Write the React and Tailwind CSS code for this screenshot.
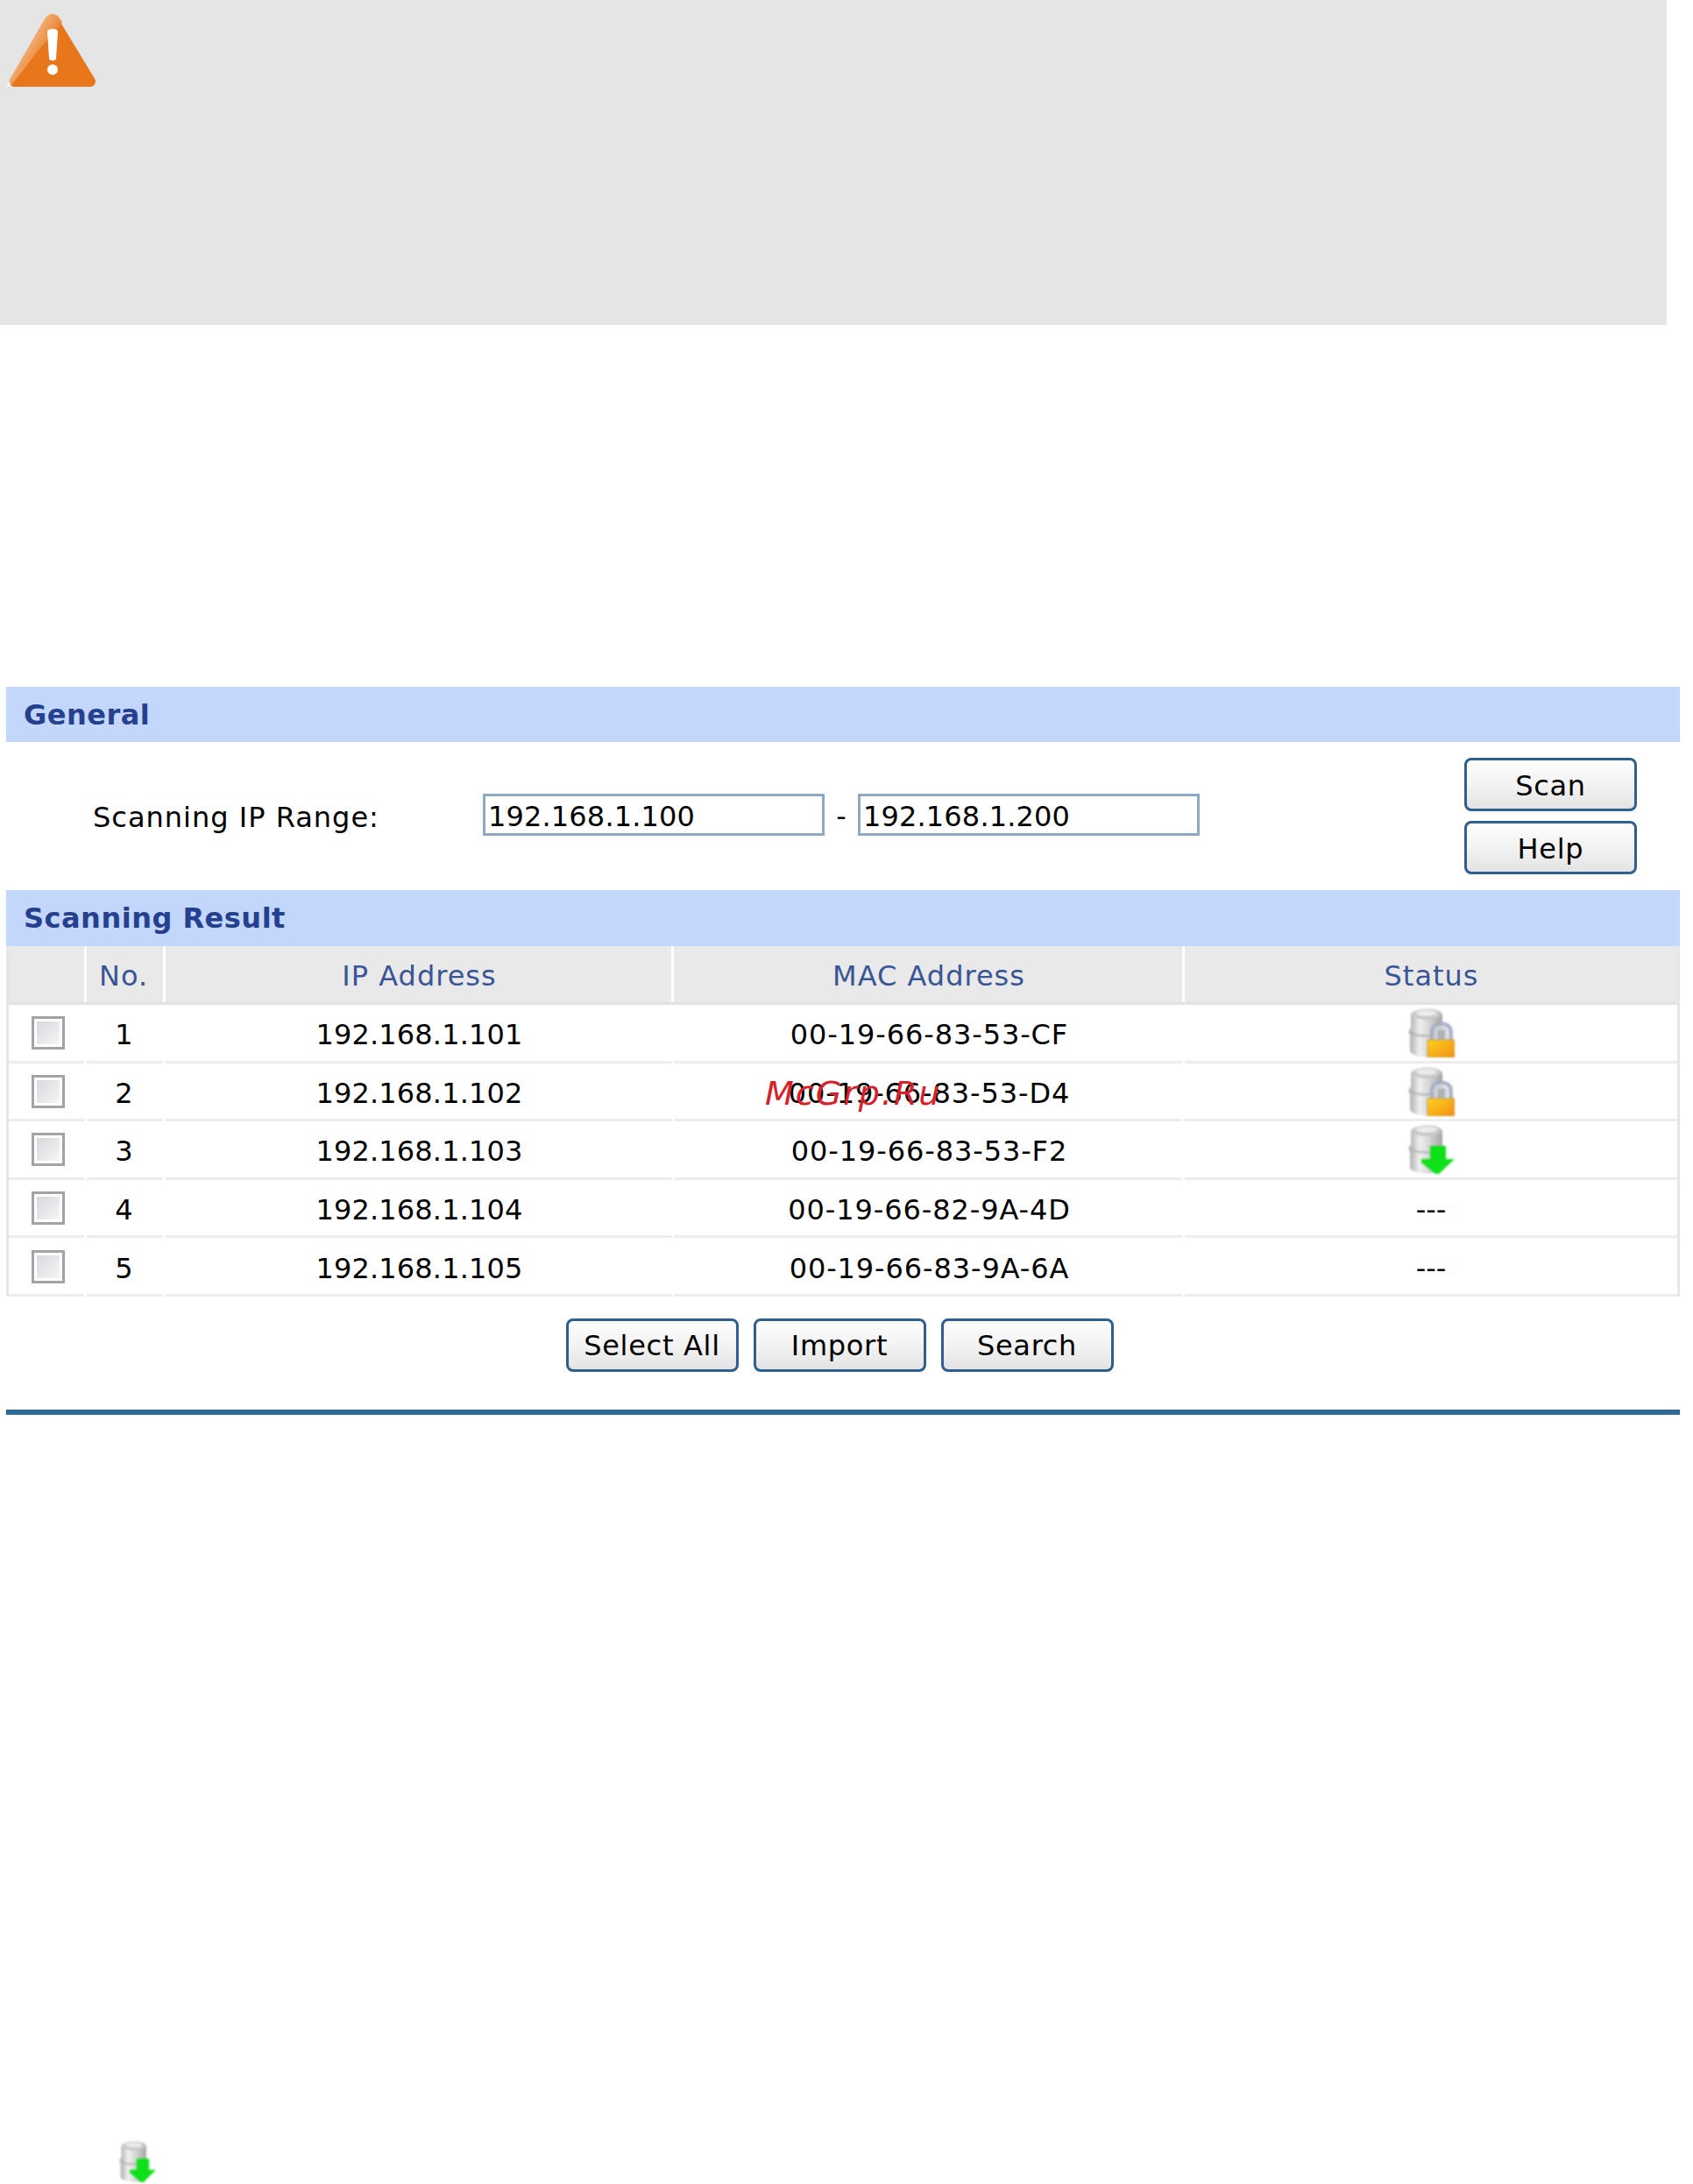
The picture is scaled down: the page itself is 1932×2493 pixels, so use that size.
import React from 'react';

const rows = [
  { no: 1, ip: '192.168.1.101', mac: '00-19-66-83-53-CF', status: 'lock' },
  { no: 2, ip: '192.168.1.102', mac: '00-19-66-83-53-D4', status: 'lock' },
  { no: 3, ip: '192.168.1.103', mac: '00-19-66-83-53-F2', status: 'down' },
  { no: 4, ip: '192.168.1.104', mac: '00-19-66-82-9A-4D', status: null },
  { no: 5, ip: '192.168.1.105', mac: '00-19-66-83-9A-6A', status: null },
];

function WarningIcon() {
  return (
    <svg width="102" height="85" viewBox="0 0 102 85" className="block">
      <defs>
        <linearGradient id="warn-gloss" x1="0.25" y1="0.1" x2="0.8" y2="0.55">
          <stop offset="0" stopColor="#f8d4b4" />
          <stop offset="0.5" stopColor="#f0a565" />
          <stop offset="1" stopColor="#e8761a" />
        </linearGradient>
      </defs>
      <polygon points="53,7 10,78 96,78" fill="#e8761a" stroke="#e8761a" strokeWidth="12" strokeLinejoin="round" />
      <path d="M53 1 C47 1 45 5 42 10 L4 76 C3 79 3 81 5 83 L22 62 C36 42 50 28 64 11 C61 5 58 1 53 1 Z" fill="url(#warn-gloss)" />
      <path d="M47 22 C47 19 49 18 53 18 C57 18 59 19 59 22 L57 52 C56.5 55 49.5 55 49 52 Z" fill="#fff" />
      <circle cx="53" cy="64.5" r="6" fill="#fff" />
      <path d="M-1 84 L4 78 L5 83 Z" fill="#f4f4f4" />
    </svg>
  );
}

function DbIcon({ type, width = 53, height = 57 }) {
  const id = `db-${type}`;
  return (
    <svg width={width} height={height} viewBox="0 0 53 57" preserveAspectRatio="none" className="block blur-[0.8px]">
      <defs>
        <linearGradient id={`${id}-body`} x1="0" y1="0" x2="1" y2="0">
          <stop offset="0" stopColor="#a8a8a8" />
          <stop offset="0.3" stopColor="#f0f0f0" />
          <stop offset="0.55" stopColor="#d8d8d8" />
          <stop offset="1" stopColor="#9c9c9c" />
        </linearGradient>
        <linearGradient id={`${id}-lock`} x1="0" y1="0" x2="1" y2="1">
          <stop offset="0" stopColor="#ffd21e" />
          <stop offset="1" stopColor="#ef8f10" />
        </linearGradient>
      </defs>
      <path d="M3 9 C3 -1 39 -1 39 9 L39 24 C42 26 42 29 40 31 L40 49 C40 59 2 59 2 49 L2 31 C0 29 0 26 3 24 Z" fill={`url(#${id}-body)`} />
      <ellipse cx="21" cy="8" rx="16" ry="6" fill="#c8c8c8" />
      <ellipse cx="21" cy="6.5" rx="12" ry="3.5" fill="#ebebeb" />
      <path d="M2 28 C8 34 34 34 40 28" fill="none" stroke="#b0b0b0" strokeWidth="2" />
      {type === 'lock' ? (
        <>
          <path d="M27 38 L27 28 C27 15 49 15 49 28 L49 38" fill="#d0d4de" fillOpacity="0.8" stroke="#a4aac2" strokeWidth="3.5" />
          <rect x="34" y="26" width="8" height="10" fill="#b0b0b0" />
          <rect x="22" y="37" width="31" height="20" fill={`url(#${id}-lock)`} stroke="#b98a4c" strokeWidth="0.8" />
        </>
      ) : (
        <path d="M25 25 L43 25 L43 40 L53 40 L35 57 L31 57 L15 44 L15 40 L25 40 Z" fill="#0fe01a" />
      )}
    </svg>
  );
}

function Checkbox() {
  return (
    <div className="w-[38px] h-[38px] border-[3px] border-[#a3a3a3] bg-white p-[3px]">
      <div className="w-full h-full bg-gradient-to-br from-[#d5d8dd] to-[#f6f6f6]" />
    </div>
  );
}

function Button({ children }) {
  return (
    <button className="w-[197px] h-[61px] pt-[2px] rounded-[8px] border-[3px] border-[#2d5f8f] bg-gradient-to-b from-[#fdfdfd] via-[#f3f3f3] to-[#e3e3e3] text-[32px] tracking-[0.7px] text-black leading-none">
      {children}
    </button>
  );
}

function SectionBar({ children, className }) {
  return (
    <div className={`bg-[#c3d7fd] pl-[20px] flex items-center text-[32px] font-bold text-[#24408f] tracking-[0.5px] ${className}`}>
      {children}
    </div>
  );
}

export default function App() {
  const headCell = 'h-[64px] pt-[4px] bg-[#e9e9e9] flex items-center justify-center text-[#3a5596] tracking-[1px]';
  const bodyCell = 'h-[66.6px] pt-[5px] border-b-[3px] border-[#ededed] flex items-center justify-center';

  return (
    <div className="relative w-[1932px] h-[2493px] overflow-hidden bg-white text-[32px] text-black font-['DejaVu_Sans',sans-serif]">
      <div className="w-[1902px] h-[371px] bg-[#e5e5e5] pl-[7px] pt-[15px]">
        <WarningIcon />
      </div>

      <div className="w-[1910px] ml-[7px] mt-[413px]">
        <SectionBar className="h-[63px]">General</SectionBar>
        <div className="h-[169px] flex items-center">
          <div className="w-[544px] pl-[99px] pt-[2px] tracking-[1px]">Scanning IP Range:</div>
          <div className="w-[390px] h-[48px] mb-[3px] border-[3px] border-[#8ea9c4] pl-[3px] pt-[4px] flex items-center tracking-[0.15px]">192.168.1.100</div>
          <div className="w-[38px] text-center">-</div>
          <div className="w-[390px] h-[48px] mb-[3px] border-[3px] border-[#8ea9c4] pl-[3px] pt-[4px] flex items-center tracking-[0.15px]">192.168.1.200</div>
          <div className="ml-[302px] flex flex-col gap-[11px]">
            <Button>Scan</Button>
            <Button>Help</Button>
          </div>
        </div>

        <SectionBar className="h-[64px]">Scanning Result</SectionBar>
        <div className="relative border-x-[3px] border-[#e6e6e6]">
          <div className="grid grid-cols-[86px_87px_577px_580px_1fr] gap-x-[3px] border-b-[3px] border-[#e2e2e2]">
            <div className={headCell} />
            <div className={`${headCell} pr-[3px]`}>No.</div>
            <div className={`${headCell} pl-[2px]`}>IP Address</div>
            <div className={`${headCell} pl-[2px]`}>MAC Address</div>
            <div className={`${headCell} pl-[1px]`}>Status</div>
          </div>
          {rows.map((row) => (
            <div key={row.no} className="grid grid-cols-[86px_87px_577px_580px_1fr] gap-x-[3px]">
              <div className="h-[66.6px] pt-[1px] pl-[3px] border-b-[3px] border-[#ededed] flex items-center justify-center">
                <Checkbox />
              </div>
              <div className={`${bodyCell} pr-[2px]`}>{row.no}</div>
              <div className={`${bodyCell} pl-[2px] tracking-[0.15px]`}>{row.ip}</div>
              <div className={`${bodyCell} pl-[3px] tracking-[0.9px]`}>{row.mac}</div>
              {row.status ? (
                <div className="h-[66.6px] border-b-[3px] border-[#ededed] flex items-center justify-center">
                  <DbIcon type={row.status} />
                </div>
              ) : (
                <div className={bodyCell}>---</div>
              )}
            </div>
          ))}
        </div>

        <div className="flex justify-center gap-[17px] pt-[25px] pr-[8px]">
          <Button>Select All</Button>
          <Button>Import</Button>
          <Button>Search</Button>
        </div>
        <div className="mt-[43px] h-[6px] bg-[#2d6a9c]" />
      </div>

      <div className="ml-[136px] mt-[828px]">
        <DbIcon type="down" width={42} height={48} />
      </div>

      <div className="absolute left-[873px] top-[1223px] text-[38px] italic text-[#d7202a] tracking-[2px] leading-[50px]">
        McGrp.Ru
      </div>
    </div>
  );
}
